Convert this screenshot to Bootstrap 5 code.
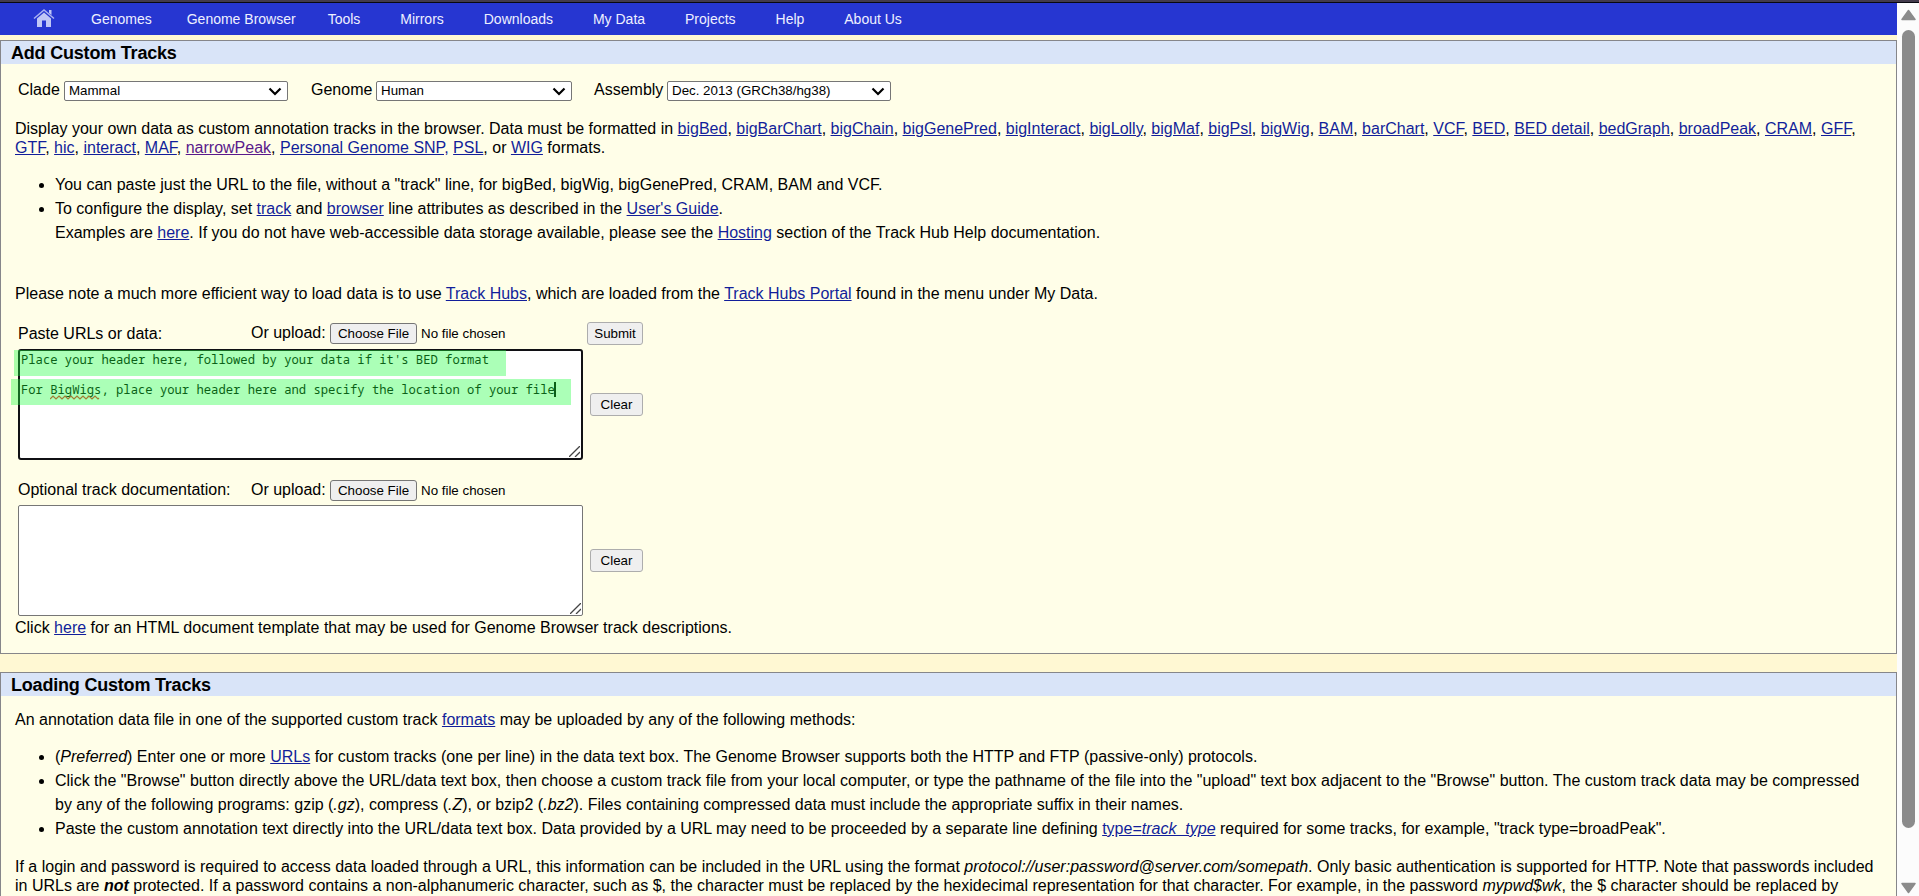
<!DOCTYPE html>
<html lang="en">
<head>
<meta charset="utf-8">
<title>Add Custom Tracks</title>
<link href="https://cdn.jsdelivr.net/npm/bootstrap@5.3.0/dist/css/bootstrap.min.css" rel="stylesheet">
<style>
body{font-family:"Liberation Sans",Arial,sans-serif;font-size:16px;line-height:19px;color:#000;background:#fff8d3}
.topline{height:3px;background:#433b4c;border-bottom:1px solid #08080f}
.menubar{height:32px;background:#2636d1;padding:0 0 0 33px}
.menubar .nav-link{color:#eef0ff;font-size:14px;line-height:32px;padding:0;margin-right:39.95px}
.panel{border:1px solid #86868a;background:#fffee8}
.panel h1{font-size:18px;font-weight:700;line-height:24px;letter-spacing:-.2px;height:23px;margin:0;padding:0 0 0 10px;background:#d9e4f8}
.panel a{color:#121e9a}
.panel a.seen{color:#5a1a8b}
.panel ul{padding-left:40px;margin:0;line-height:24px}
.inner{padding:0 22px 0 14px}
.selectors label{margin-top:-1px}
.picker{height:20px;padding:0 0 0 4px;border:1px solid #767676;border-radius:2px;font-size:13.33px;line-height:18px;color:#000;background-color:#fff;background-position:right 5px center;background-size:14px 9px;background-image:url("data:image/svg+xml,%3Csvg xmlns='http://www.w3.org/2000/svg' viewBox='0 0 14 9'%3E%3Cpath d='M1.5 1.5 7 7l5.5-5.5' fill='none' stroke='%23000' stroke-width='2.2'/%3E%3C/svg%3E")}
.push{background:#efefef;border:1px solid #767676;border-radius:3px;color:#000;font-size:13.33px;line-height:15px;padding:0;height:21px}
.push.soft{border:1.5px solid #adadad;height:23px}
.pad{width:565px;height:111px;background:#fff;border:1px solid #767676;border-radius:2px;font:12.2px/15px "Noto Sans Mono","DejaVu Sans Mono",monospace;padding:2px 3px;white-space:pre}
.pad.active{border:2px solid #101014;border-radius:3px;padding:1px 1px}
.grip{right:1px;bottom:1px}
.glow{background:rgba(27,255,60,.37);height:26px}
.g1{left:-6px;top:-1px;width:492px}
.g2{left:-9px;top:28px;width:560px}
.squig{position:absolute;left:30px;top:44px}
.caret{display:inline-block;width:2px;height:15px;margin-left:-1px;background:#000;vertical-align:-3px}
.scroller{width:22px;background:#fcfcfc}
.thumb{width:13px;height:798px;border-radius:7px;background:#8b8b8b}
</style>
</head>
<body class="vh-100 overflow-hidden d-flex flex-column">
<div class="topline flex-shrink-0"></div>
<div class="d-flex flex-grow-1 overflow-hidden">
<main class="flex-grow-1 overflow-hidden">
<nav class="menubar nav align-items-start flex-nowrap">
<a class="nav-link" href="#" style="margin-right:36px" aria-label="Home"><svg width="22" height="20" viewBox="0 0 22 20" class="d-block" style="margin-top:5px"><path d="M1 10.5 11 2l10 8.500" fill="none" stroke="#aab2f0" stroke-width="1.500"/><path d="M16 2h2.500v5L16 5zM4 10.500 11 4.500l7 6V19h-5v-6.500H9V19H4z" fill="#c0c7f6"/></svg></a>
<a class="nav-link" href="#" style="margin-right:35px">Genomes</a><a class="nav-link" href="#" style="margin-right:32px">Genome Browser</a><a class="nav-link" href="#">Tools</a><a class="nav-link" href="#">Mirrors</a><a class="nav-link" href="#">Downloads</a><a class="nav-link" href="#">My Data</a><a class="nav-link" href="#">Projects</a><a class="nav-link" href="#">Help</a><a class="nav-link" href="#">About Us</a>
</nav>

<section class="panel" style="margin-top:5px;height:614px">
<h1>Add Custom Tracks</h1>
<div class="inner">
<div class="selectors d-flex align-items-start" style="padding:17px 0 0 3px;height:55px">
<label style="width:46px">Clade</label><select class="form-select picker" style="width:224px"><option>Mammal</option></select>
<label style="width:65px;margin-left:23px">Genome</label><select class="form-select picker" style="width:196px"><option>Human</option></select>
<label style="width:73px;margin-left:22px">Assembly</label><select class="form-select picker" style="width:224px"><option>Dec. 2013 (GRCh38/hg38)</option></select>
</div>
<p class="m-0">Display your own data as custom annotation tracks in the browser. Data must be formatted in <a href="#">bigBed</a>, <a href="#">bigBarChart</a>, <a href="#">bigChain</a>, <a href="#">bigGenePred</a>, <a href="#">bigInteract</a>, <a href="#">bigLolly</a>, <a href="#">bigMaf</a>, <a href="#">bigPsl</a>, <a href="#">bigWig</a>, <a href="#">BAM</a>, <a href="#">barChart</a>, <a href="#">VCF</a>, <a href="#">BED</a>, <a href="#">BED detail</a>, <a href="#">bedGraph</a>, <a href="#">broadPeak</a>, <a href="#">CRAM</a>, <a href="#">GFF</a>, <br><a href="#">GTF</a>, <a href="#">hic</a>, <a href="#">interact</a>, <a href="#">MAF</a>, <a href="#" class="seen">narrowPeak</a>, <a href="#">Personal Genome SNP,</a> <a href="#">PSL</a>, or <a href="#">WIG</a> formats.</p>
<ul style="margin-top:16px">
<li>You can paste just the URL to the file, without a "track" line, for bigBed, bigWig, bigGenePred, CRAM, BAM and VCF.</li>
<li>To configure the display, set <a href="#">track</a> and <a href="#">browser</a> line attributes as described in the <a href="#">User's Guide</a>.<br>Examples are <a href="#">here</a>. If you do not have web-accessible data storage available, please see the <a href="#">Hosting</a> section of the Track Hub Help documentation.</li>
</ul>
<p class="mb-0" style="margin-top:39px">Please note a much more efficient way to load data is to use <a href="#">Track Hubs</a>, which are loaded from the <a href="#">Track Hubs Portal</a> found in the menu under My Data.</p>
<div style="padding:19px 0 0 3px">
<div class="d-flex align-items-start" style="height:27px">
<span style="width:233px;padding-top:2px">Paste URLs or data:</span><span style="width:79px;padding-top:1px">Or upload:</span>
<button class="btn push" style="width:87px;margin-top:1px">Choose File</button><span style="font-size:13.33px;margin:2px 0 0 4px;width:166px">No file chosen</span>
<button class="btn push soft" style="width:56px">Submit</button>
</div>
<div class="d-flex align-items-center">
<div class="pad active position-relative">Place your header here, followed by your data if it's BED format

For BigWigs, place your header here and specify the location of your file<i class="caret"></i><svg class="squig" width="52" height="5" viewBox="0 0 52 5"><path d="M0 4l3-3 3 3 3-3 3 3 3-3 3 3 3-3 3 3 3-3 3 3 3-3 3 3 3-3 3 3 3-3 3 3 1-1" fill="none" stroke="#f03030" stroke-width="1.200"/></svg><svg class="grip position-absolute" width="11" height="11"><path d="M0 11 11 0M6 11l5-5" stroke="#444" stroke-width="1.300"/></svg><span class="glow g1 position-absolute"></span><span class="glow g2 position-absolute"></span></div>
<button class="btn push soft" style="width:53px;margin-left:7px">Clear</button>
</div>
<div class="d-flex align-items-start" style="margin-top:20px;height:25px">
<span style="width:233px">Optional track documentation:</span><span style="width:79px">Or upload:</span>
<button class="btn push" style="width:87px">Choose File</button><span style="font-size:13.33px;margin:1px 0 0 4px">No file chosen</span>
</div>
<div class="d-flex align-items-center">
<div class="pad position-relative"><svg class="grip position-absolute" width="11" height="11"><path d="M0 11 11 0M6 11l5-5" stroke="#444" stroke-width="1.300"/></svg></div>
<button class="btn push soft" style="width:53px;margin-left:7px">Clear</button>
</div>
</div>
<p class="m-0" style="padding-top:2px">Click <a href="#">here</a> for an HTML document template that may be used for Genome Browser track descriptions.</p>
</div>
</section>

<section class="panel" style="margin-top:18px;height:300px">
<h1>Loading Custom Tracks</h1>
<div class="inner">
<p class="mb-0" style="padding-top:14px">An annotation data file in one of the supported custom track <a href="#">formats</a> may be uploaded by any of the following methods:</p>
<ul style="margin-top:16px">
<li>(<em>Preferred</em>) Enter one or more <a href="#">URLs</a> for custom tracks (one per line) in the data text box. The Genome Browser supports both the HTTP and FTP (passive-only) protocols.</li>
<li>Click the "Browse" button directly above the URL/data text box, then choose a custom track file from your local computer, or type the pathname of the file into the "upload" text box adjacent to the "Browse" button. The custom track data may be compressed<br>by any of the following programs: gzip (<em>.gz</em>), compress (<em>.Z</em>), or bzip2 (<em>.bz2</em>). Files containing compressed data must include the appropriate suffix in their names.</li>
<li>Paste the custom annotation text directly into the URL/data text box. Data provided by a URL may need to be proceeded by a separate line defining <a href="#">type=<em>track_type</em></a> required for some tracks, for example, "track type=broadPeak".</li>
</ul>
<p class="mb-0 text-nowrap" style="margin-top:16px">If a login and password is required to access data loaded through a URL, this information can be included in the URL using the format <em>protocol://user:password@server.com/somepath</em>. Only basic authentication is supported for HTTP. Note that passwords included<br>in URLs are <strong><em>not</em></strong> protected. If a password contains a non-alphanumeric character, such as $, the character must be replaced by the hexidecimal representation for that character. For example, in the password <em>mypwd$wk</em>, the $ character should be replaced by</p>
</div>
</section>
</main>
<aside class="scroller flex-shrink-0 d-flex flex-column align-items-center justify-content-between" style="padding:6px 0 2px 1px">
<svg width="15" height="12" viewBox="0 0 15 12"><path d="M7.500 1.500 14 10.500H1z" fill="#8b8b8b" stroke="#8b8b8b" stroke-width="1.500" stroke-linejoin="round"/></svg>
<div class="thumb" style="margin:9px 0 auto"></div>
<svg width="15" height="12" viewBox="0 0 15 12"><path d="M7.500 10.500 14 1.500H1z" fill="#8b8b8b" stroke="#8b8b8b" stroke-width="1.500" stroke-linejoin="round"/></svg>
</aside>
</div>
<script src="https://cdn.jsdelivr.net/npm/bootstrap@5.3.0/dist/js/bootstrap.bundle.min.js"></script>
</body>
</html>
